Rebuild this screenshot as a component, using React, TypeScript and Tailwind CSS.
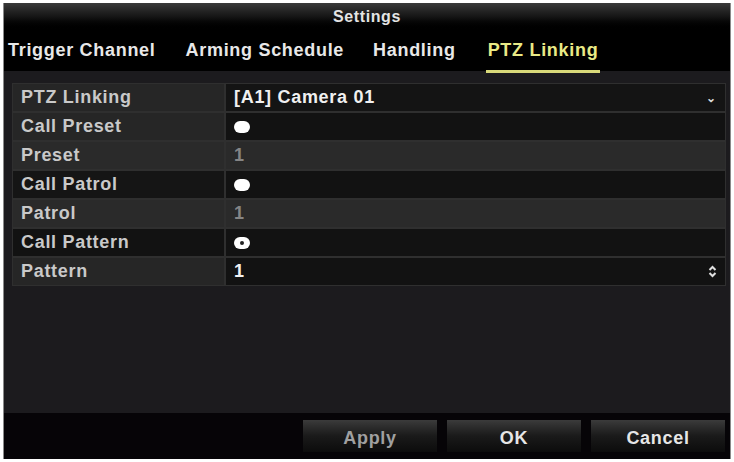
import { ReactNode } from "react";

const font = { fontFamily: '"Liberation Sans", Arial, sans-serif' };

function Dot({ ring }: { ring?: boolean }) {
  return (
    <span className="relative inline-block w-[16px] h-[12px] rounded-full bg-white">
      {ring && (
        <span className="absolute left-[6px] top-[4px] w-[4px] h-[4px] rounded-full bg-[#222]" />
      )}
    </span>
  );
}

function Row({
  label,
  labelBg,
  valueBg,
  children,
  right,
}: {
  label: string;
  labelBg: string;
  valueBg: string;
  children?: ReactNode;
  right?: ReactNode;
}) {
  return (
    <div className="flex h-[29px]">
      <div
        className={`w-[213px] flex items-center pl-[8px] border border-[#2f2f2f] text-[#c9c9c9] ${labelBg}`}
      >
        {label}
      </div>
      <div
        className={`flex-1 flex items-center justify-between pl-[8px] pr-[8px] border border-[#2f2f2f] ${valueBg}`}
      >
        <div className="flex items-center">{children}</div>
        {right}
      </div>
    </div>
  );
}

export default function App() {
  return (
    <div className="w-[734px] h-[462px] bg-white p-[3px]" style={font}>
      <div className="h-full flex flex-col bg-black border-l border-r border-[#8a8a8a]">
        {/* title */}
        <div className="h-[28px] flex items-center justify-center bg-gradient-to-b from-[#3a3a3a] via-[#141414] to-black text-[#e4e4e4] font-bold text-[16px] tracking-[0.6px]">
          Settings
        </div>

        {/* tabs */}
        <div className="h-[40px] flex items-center pl-[4px] bg-black font-bold text-[18px] tracking-[0.7px] text-[#e8e8e8]">
          <div className="pb-[2px]">Trigger Channel</div>
          <div className="ml-[30px] pb-[2px]">Arming Schedule</div>
          <div className="ml-[29px] pb-[2px]">Handling</div>
          <div className="ml-[32px] relative text-[#e9ea86] pb-[2px]">
            PTZ Linking
            <div className="absolute left-[-2px] right-[-2px] bottom-[-7px] h-[3px] bg-[#d9da7a]" />
          </div>
        </div>

        {/* content */}
        <div className="flex-1 bg-[#1c1b1e] pl-[8px] pr-[4px] pt-[12px] font-bold text-[18px] tracking-[0.7px]">
          <Row
            label="PTZ Linking"
            labelBg="bg-[#262626]"
            valueBg="bg-[#141414]"
            right={<span className="text-[#ddd] text-[12px] font-bold">⌄</span>}
          >
            <span className="text-[#f0f0f0]">[A1] Camera 01</span>
          </Row>
          <Row label="Call Preset" labelBg="bg-[#262626]" valueBg="bg-[#121212]">
            <Dot />
          </Row>
          <Row label="Preset" labelBg="bg-[#2a2a2a]" valueBg="bg-[#2a2a2a]">
            <span className="text-[#858585]">1</span>
          </Row>
          <Row label="Call Patrol" labelBg="bg-[#151515]" valueBg="bg-[#121212]">
            <Dot />
          </Row>
          <Row label="Patrol" labelBg="bg-[#2a2a2a]" valueBg="bg-[#2a2a2a]">
            <span className="text-[#858585]">1</span>
          </Row>
          <Row label="Call Pattern" labelBg="bg-[#121212]" valueBg="bg-[#121212]">
            <Dot ring />
          </Row>
          <Row
            label="Pattern"
            labelBg="bg-[#262626]"
            valueBg="bg-[#121212]"
            right={
              <svg width="9" height="13" viewBox="0 0 9 13">
                <path d="M1.5 5 L4.5 2 L7.5 5" fill="none" stroke="#e0e0e0" strokeWidth="2" />
                <path d="M1.5 8 L4.5 11 L7.5 8" fill="none" stroke="#e0e0e0" strokeWidth="2" />
              </svg>
            }
          >
            <span className="text-[#f0f0f0]">1</span>
          </Row>
        </div>

        {/* footer */}
        <div className="h-[46px] bg-[#060407] flex items-center justify-end gap-[10px] pr-[5px] font-bold text-[18px] tracking-[0.7px]">
          {["Apply", "OK", "Cancel"].map((b) => (
            <button
              key={b}
              className={`w-[134px] h-[32px] pt-[4px] bg-gradient-to-b from-[#3b3b3b] via-[#1a1a1a] to-[#0c0c0c] ${
                b === "Apply" ? "text-[#a0a0a0]" : "text-[#e6e6e6]"
              }`}
            >
              {b}
            </button>
          ))}
        </div>
      </div>
    </div>
  );
}
